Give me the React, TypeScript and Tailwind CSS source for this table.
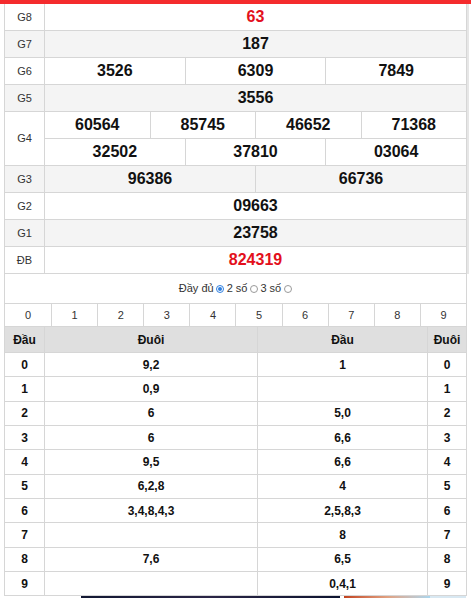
import React from "react";

type PrizeRow = { label: string; values: string[][]; red?: boolean; gray: boolean };

const prizes: PrizeRow[] = [
  { label: "G8", values: [["63"]], red: true, gray: false },
  { label: "G7", values: [["187"]], gray: true },
  { label: "G6", values: [["3526", "6309", "7849"]], gray: false },
  { label: "G5", values: [["3556"]], gray: true },
  { label: "G4", values: [["60564", "85745", "46652", "71368"], ["32502", "37810", "03064"]], gray: false },
  { label: "G3", values: [["96386", "66736"]], gray: true },
  { label: "G2", values: [["09663"]], gray: false },
  { label: "G1", values: [["23758"]], gray: true },
  { label: "ĐB", values: [["824319"]], red: true, gray: false },
];

const loto: [string, string, string, string][] = [
  ["0", "9,2", "1", "0"],
  ["1", "0,9", "", "1"],
  ["2", "6", "5,0", "2"],
  ["3", "6", "6,6", "3"],
  ["4", "9,5", "6,6", "4"],
  ["5", "6,2,8", "4", "5"],
  ["6", "3,4,8,4,3", "2,5,8,3", "6"],
  ["7", "", "8", "7"],
  ["8", "7,6", "6,5", "8"],
  ["9", "", "0,4,1", "9"],
];

function Radio({ checked }: { checked?: boolean }) {
  return checked ? (
    <span className="mx-[2.5px] inline-flex h-[8px] w-[8px] items-center justify-center rounded-full border border-[#2f7fe0] bg-white">
      <span className="h-[4px] w-[4px] rounded-full bg-[#2f7fe0]" />
    </span>
  ) : (
    <span className="mx-[2.5px] inline-block h-[8px] w-[8px] rounded-full border border-[#9a9a9a] bg-white" />
  );
}

export default function App() {
  return (
    <div className="relative h-[598px] w-[471px] overflow-hidden bg-white font-[family-name:'Liberation_Sans',Arial,sans-serif] text-[#000]">
      <div className="h-[4px] w-full bg-[#f42b2d]" />
      <div className="ml-[4px] w-[463px]">
        {/* Prize table */}
        <div className="border-x border-[#d6d6d6] shadow-[2px_0_0_#e6e6e6]">
          {prizes.map((p) => (
            <div key={p.label} className={`flex border-b border-[#d6d6d6] ${p.gray ? "bg-[#f4f4f4]" : "bg-white"}`}>
              <div className="flex w-[40px] shrink-0 items-center justify-center border-r border-[#d6d6d6] text-[11px] text-[#333]">
                {p.label}
              </div>
              <div className="flex flex-1 flex-col">
                {p.values.map((line, li) => (
                  <div
                    key={li}
                    className={`flex h-[26px] ${li > 0 ? "h-[27px] border-t border-[#d6d6d6]" : ""}`}
                  >
                    {line.map((v, vi) => (
                      <div
                        key={vi}
                        className={`flex flex-1 basis-0 items-center justify-center text-[16px] font-bold ${
                          vi > 0 ? "border-l border-[#d6d6d6]" : ""
                        } ${p.red ? "text-[#e3101c]" : "text-[#111]"}`}
                      >
                        {v}
                      </div>
                    ))}
                  </div>
                ))}
              </div>
            </div>
          ))}
        </div>

        {/* Options */}
        <div className="flex h-[30px] items-center justify-center border-x border-b border-[#d6d6d6] pl-[2px] text-[11px] text-[#333]">
          <span>Đầy đủ</span>
          <Radio checked />
          <span>2 số</span>
          <Radio />
          <span>3 số</span>
          <Radio />
        </div>

        {/* Digit row */}
        <div className="grid h-[23px] grid-cols-10 border-x border-b border-[#d6d6d6] text-[11px] text-[#333]">
          {["0", "1", "2", "3", "4", "5", "6", "7", "8", "9"].map((d, i) => (
            <div key={d} className={`flex items-center justify-center ${i > 0 ? "border-l border-[#d6d6d6]" : ""}`}>
              {d}
            </div>
          ))}
        </div>

        {/* Loto table */}
        <div className="border-x border-[#d6d6d6] text-[12px] font-bold text-[#111]">
          <div className="flex h-[26px] border-b border-[#d6d6d6] bg-[#dfdfdf]">
            <div className="flex w-[40px] items-center justify-center border-r border-[#d6d6d6]">Đầu</div>
            <div className="flex w-[213px] items-center justify-center border-r border-[#d6d6d6]">Đuôi</div>
            <div className="flex w-[170px] items-center justify-center border-r border-[#d6d6d6]">Đầu</div>
            <div className="flex flex-1 items-center justify-center">Đuôi</div>
          </div>
          {loto.map((r) => (
            <div key={r[0]} className="flex h-[24.33px] border-b border-[#d6d6d6] bg-white">
              <div className="flex w-[40px] items-center justify-center border-r border-[#d6d6d6]">{r[0]}</div>
              <div className="flex w-[213px] items-center justify-center border-r border-[#d6d6d6]">{r[1]}</div>
              <div className="flex w-[170px] items-center justify-center border-r border-[#d6d6d6]">{r[2]}</div>
              <div className="flex flex-1 items-center justify-center">{r[3]}</div>
            </div>
          ))}
        </div>
      </div>

      {/* Peek of an image below */}
      <div className="flex h-[3px]">
        <div className="w-[81px]" />
        <div className="w-[259px] bg-gradient-to-r from-[#121833] via-[#2a2546] to-[#0d1430]" />
        <div className="w-[4px]" />
        <div className="w-[86px] bg-gradient-to-r from-[#c0401c] via-[#e0a080] to-[#a9d6ee]" />
        <div className="w-[36px] bg-[#d8e8f2]" />
      </div>
    </div>
  );
}
